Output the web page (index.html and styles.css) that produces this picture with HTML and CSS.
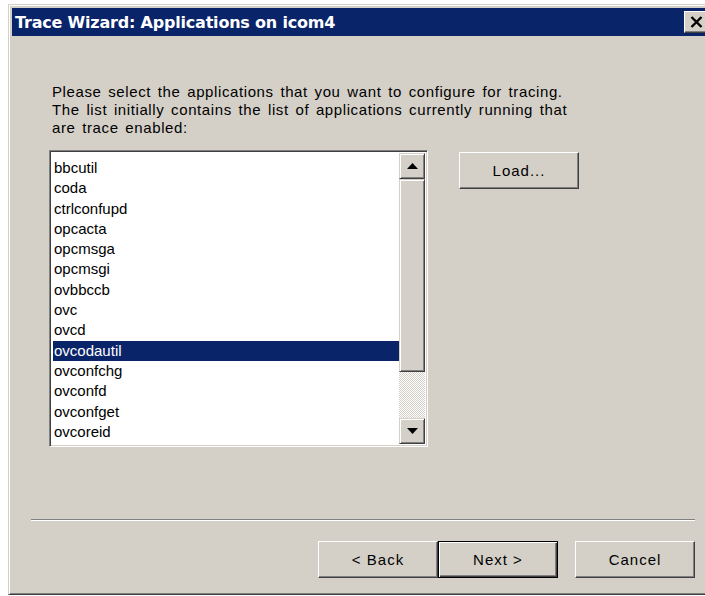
FILE: index.html
```html
<!DOCTYPE html>
<html>
<head>
<meta charset="utf-8">
<title>Trace Wizard</title>
<link rel="stylesheet" href="styles.css">
</head>
<body>
<div class="window">
  <div class="titlebar">
    <span class="title">Trace Wizard: Applications on icom4</span>
    <span class="close">
      <svg width="13" height="12" viewBox="0 0 13 12"><path d="M1.5 1L11.5 11M11.5 1L1.5 11" stroke="#000" stroke-width="2.4" fill="none"/></svg>
    </span>
  </div>
  <div class="client">
    <p class="intro">Please select the applications that you want to configure for tracing.<br>The list initially contains the list of applications currently running that<br>are trace enabled:</p>
    <div class="picker">
      <div class="listbox">
        <ul class="items">
          <li>bbcutil</li>
          <li>coda</li>
          <li>ctrlconfupd</li>
          <li>opcacta</li>
          <li>opcmsga</li>
          <li>opcmsgi</li>
          <li>ovbbccb</li>
          <li>ovc</li>
          <li>ovcd</li>
          <li class="selected">ovcodautil</li>
          <li>ovconfchg</li>
          <li>ovconfd</li>
          <li>ovconfget</li>
          <li>ovcoreid</li>
        </ul>
        <div class="scrollbar">
          <div class="sbtn"><svg width="11" height="6" viewBox="0 0 11 6"><path d="M5.5 0L11 6H0z" fill="#000"/></svg></div>
          <div class="thumb"></div>
          <div class="track"></div>
          <div class="sbtn"><svg width="11" height="6" viewBox="0 0 11 6"><path d="M0 0h11L5.5 6z" fill="#000"/></svg></div>
        </div>
      </div>
      <button class="btn load">Load...</button>
    </div>
    <div class="separator"></div>
    <div class="actions">
      <button class="btn">&lt; Back</button>
      <button class="btn default">Next &gt;</button>
      <button class="btn cancel">Cancel</button>
    </div>
  </div>
</div>
</body>
</html>
```
FILE: styles.css
```css
html, body {
  margin: 0;
  padding: 0;
  background: #ffffff;
  overflow: hidden;
  height: 596px;
}

body {
  font-family: "Liberation Sans", Arial, sans-serif;
  font-size: 15px;
  color: #000;
}

.window {
  margin: 4px 0 0 8px;
  width: 704px;
  height: 591px;
  box-sizing: border-box;
  background: #d4d0c8;
  border-top: 1px solid #d4d0c8;
  border-left: 1px solid #d4d0c8;
  border-bottom: 1px solid #404040;
  box-shadow: inset 1px 1px 0 #ffffff, inset 0 -1px 0 #808080;
  padding: 3px 2px 0 3px;
  display: flex;
  flex-direction: column;
}

.titlebar {
  height: 28px;
  background: #0a246a;
  color: #ffffff;
  display: flex;
  align-items: center;
  justify-content: space-between;
  padding: 0 0 0 3px;
}

.title {
  font-family: "DejaVu Sans", sans-serif;
  font-weight: bold;
  font-size: 16px;
  letter-spacing: -0.2px;
}

.close {
  width: 25px;
  height: 22px;
  box-sizing: border-box;
  background: #d4d0c8;
  border-top: 1px solid #ffffff;
  border-left: 1px solid #ffffff;
  border-right: 1px solid #404040;
  border-bottom: 1px solid #404040;
  box-shadow: inset -1px -1px 0 #808080;
  display: flex;
  align-items: center;
  justify-content: center;
  margin-right: 1px;
}

.client {
  flex: 1;
  display: flex;
  flex-direction: column;
}

.intro {
  margin: 47px 0 0 40px;
  line-height: 18px;
  letter-spacing: 0.6px;
  word-spacing: 2px;
}

.picker {
  display: flex;
  align-items: flex-start;
  margin: 13px 0 0 37px;
  gap: 31px;
}

.listbox {
  width: 379px;
  height: 297px;
  box-sizing: border-box;
  background: #ffffff;
  border-top: 1px solid #808080;
  border-left: 1px solid #808080;
  border-right: 1px solid #ffffff;
  border-bottom: 1px solid #ffffff;
  box-shadow: inset 1px 1px 0 #404040, inset -1px -1px 0 #d4d0c8;
  padding: 2px 2px 2px 2px;
  display: flex;
  overflow: hidden;
}

.items {
  list-style: none;
  margin: 0;
  padding: 5px 0 0 1px;
  flex: 1;
  overflow: hidden;
}

.items li {
  height: 20.3px;
  line-height: 20px;
  padding-left: 1px;
}

.items li.selected {
  background: #0a246a;
  color: #ffffff;
}

.scrollbar {
  width: 26px;
  display: flex;
  flex-direction: column;
}

.sbtn, .thumb {
  box-sizing: border-box;
  background: #d4d0c8;
  border-top: 1px solid #d4d0c8;
  border-left: 1px solid #d4d0c8;
  border-right: 1px solid #404040;
  border-bottom: 1px solid #404040;
  box-shadow: inset 1px 1px 0 #ffffff, inset -1px -1px 0 #808080;
}

.sbtn {
  height: 26px;
  display: flex;
  align-items: center;
  justify-content: center;
}

.thumb {
  height: 193px;
}

.track {
  flex: 1;
  background-color: #ffffff;
  background-image:
    linear-gradient(45deg, #d4d0c8 25%, transparent 25%, transparent 75%, #d4d0c8 75%),
    linear-gradient(45deg, #d4d0c8 25%, transparent 25%, transparent 75%, #d4d0c8 75%);
  background-size: 2px 2px;
  background-position: 0 0, 1px 1px;
}

.btn {
  font-family: "Liberation Sans", Arial, sans-serif;
  font-size: 15px;
  letter-spacing: 1px;
  color: #000;
  width: 120px;
  height: 37px;
  box-sizing: border-box;
  background: #d4d0c8;
  border-top: 1px solid #ffffff;
  border-left: 1px solid #ffffff;
  border-right: 1px solid #404040;
  border-bottom: 1px solid #404040;
  box-shadow: inset -1px -1px 0 #808080;
  padding: 0;
  margin: 0;
}

.load {
  margin-top: 2px;
}

.btn.default {
  border: 1px solid #000000;
  box-shadow: inset 1px 1px 0 #ffffff, inset -1px -1px 0 #404040, inset -2px -2px 0 #808080;
}

.separator {
  margin: 72px 0 0 19px;
  width: 664px;
  height: 1px;
  background: #808080;
  border-bottom: 1px solid #ffffff;
}

.actions {
  display: flex;
  margin: 20px 0 0 306px;
}

.cancel {
  margin-left: 17px;
}
```
